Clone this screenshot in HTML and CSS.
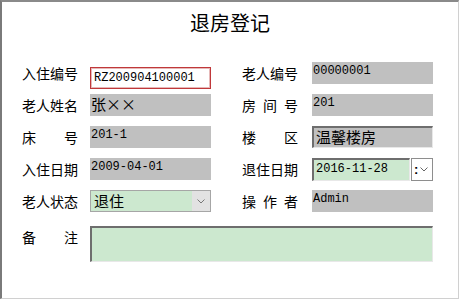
FILE: index.html
```html
<!DOCTYPE html>
<html lang="zh-CN">
<head>
    <meta charset="UTF-8">
    <title>退房登记</title>
    <link rel="stylesheet" href="styles.css">
</head>
<body>
    <div class="window">
        <h1 class="title">退房登记</h1>

        <div class="form">
            <label class="label">入住编号</label>
            <div class="field"><input type="text" class="input-edit" value="RZ200904100001"></div>
            <label class="label">老人编号</label>
            <div class="box gray mono">00000001</div>

            <label class="label">老人姓名</label>
            <div class="field"><div class="box gray cjk">张××</div></div>
            <label class="label">房 间 号</label>
            <div class="box gray mono">201</div>

            <label class="label">床 号</label>
            <div class="field"><div class="box gray mono">201-1</div></div>
            <label class="label">楼 区</label>
            <div class="box gray inset cjk">温馨楼房</div>

            <label class="label">入住日期</label>
            <div class="field"><div class="box gray mono">2009-04-01</div></div>
            <label class="label">退住日期</label>
            <div class="date">
                <div class="box green inset mono date-text">2016-11-28</div>
                <div class="date-btn">
                    <span class="colon">:</span>
                    <svg width="8" height="5" viewBox="0 0 8 5"><polyline points="0.5,0.5 4,4 7.5,0.5" fill="none" stroke="#666" stroke-width="1"/></svg>
                </div>
            </div>

            <label class="label">老人状态</label>
            <div class="field">
                <div class="select">
                    <span class="select-value">退住</span>
                    <span class="select-arrow">
                        <svg width="8" height="5" viewBox="0 0 8 5"><polyline points="0.5,0.5 4,4 7.5,0.5" fill="none" stroke="#777" stroke-width="1"/></svg>
                    </span>
                </div>
            </div>
            <label class="label">操 作 者</label>
            <div class="box gray mono">Admin</div>

            <label class="label remark-label">备 注</label>
            <div class="remark"></div>
        </div>
    </div>
</body>
</html>
```

FILE: styles.css
```css
* {
    margin: 0;
    padding: 0;
    box-sizing: border-box;
}
body {
    background-color: white;
    font-family: "Noto Sans CJK SC", sans-serif;
    color: #000;
}
.window {
    width: 459px;
    height: 299px;
    border-top: 2px solid #8a8a8a;
    border-left: 2px solid #7a7a7a;
    border-right: 1px solid #d0d0d0;
    border-bottom: 1px solid #d0d0d0;
    background-color: white;
}
.title {
    font-size: 20px;
    font-weight: normal;
    line-height: 24px;
    text-align: center;
    padding-top: 9px;
    height: 60px;
}
.form {
    display: grid;
    grid-template-columns: 68px 152px 70px 121px;
    grid-auto-rows: 22px;
    row-gap: 10px;
    padding-left: 20px;
}
.label {
    font-size: 14px;
    line-height: 22px;
    width: 56px;
    text-align: justify;
    text-align-last: justify;
    white-space: normal;
}
.field {
    width: 121px;
}
.input-edit {
    width: 121px;
    height: 22px;
    border: 1px solid #c0383a;
    box-shadow: inset 0 0 0 1px #e6b8b8;
    padding: 0 3px;
    font-family: "Liberation Mono", monospace;
    font-size: 12px;
    color: #000;
    outline: none;
}
.box {
    width: 121px;
    height: 22px;
    padding: 1px 1px 0;
    overflow: hidden;
    white-space: nowrap;
}
.gray {
    background-color: #c0c0c0;
}
.green {
    background-color: #cce8cf;
}
.inset {
    border-top: 2px solid #6e6e6e;
    border-left: 2px solid #6e6e6e;
    border-right: 1px solid #e8e8e8;
    border-bottom: 1px solid #e8e8e8;
    padding: 0 2px;
}
.mono {
    font-family: "Liberation Mono", monospace;
    font-size: 12px;
    line-height: 16px;
}
.cjk {
    font-size: 15px;
    line-height: 18px;
}
.inset.cjk {
    line-height: 18px;
}
.date {
    display: flex;
    width: 121px;
    height: 23px;
}
.date-text {
    width: 98px;
    height: 23px;
    line-height: 18px;
}
.date-btn {
    width: 22px;
    height: 23px;
    margin-left: 1px;
    border: 1px solid #8e8e8e;
    background-color: white;
    display: flex;
    align-items: center;
    gap: 2px;
    padding-left: 2px;
}
.colon {
    font-family: "Liberation Sans", sans-serif;
    font-size: 13px;
    font-weight: bold;
    line-height: 13px;
}
.select {
    display: flex;
    width: 121px;
    height: 22px;
    border: 1px solid #a6a6a6;
}
.select-value {
    flex: 1;
    background-color: #cce8cf;
    font-size: 15px;
    line-height: 20px;
    padding-left: 3px;
}
.select-arrow {
    width: 18px;
    background-color: #e2e2e2;
    display: flex;
    align-items: center;
    justify-content: center;
}
.remark-label {
    margin-top: 4px;
}
.remark {
    grid-column: 2 / 5;
    margin-top: 4px;
    height: 36px;
    background-color: #cce8cf;
    border-top: 2px solid #6e6e6e;
    border-left: 2px solid #6e6e6e;
    border-right: 1px solid #e8e8e8;
    border-bottom: 1px solid #e8e8e8;
}
```
